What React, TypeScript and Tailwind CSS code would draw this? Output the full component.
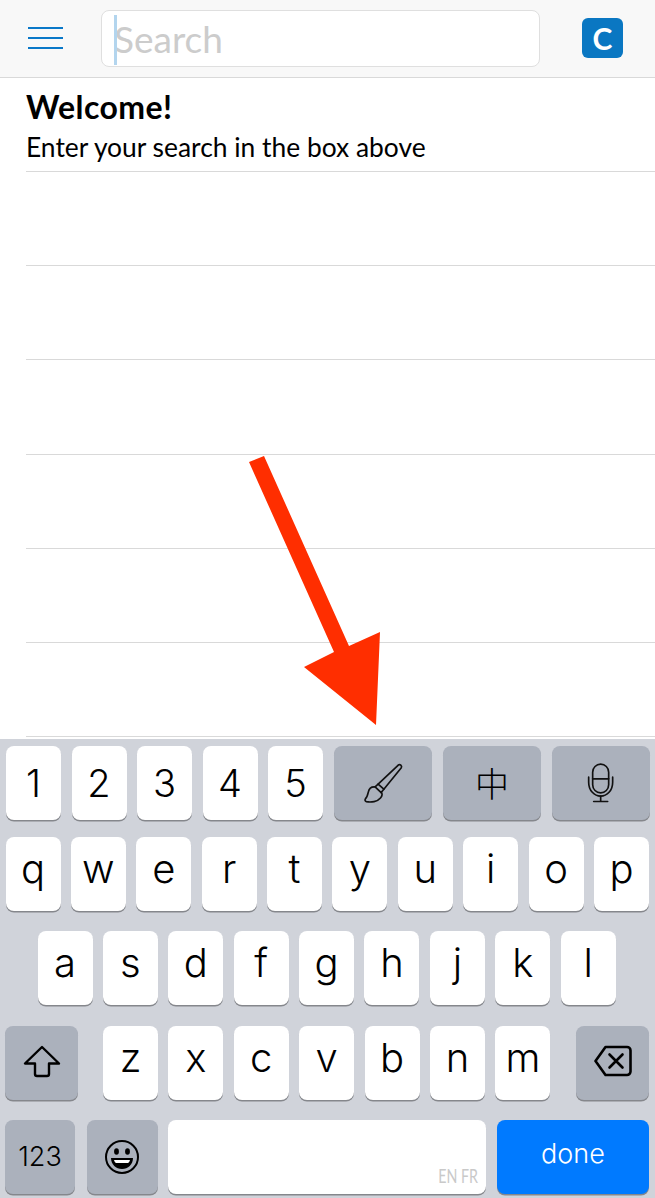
const textFont = "font-['Lato','Noto_Sans',sans-serif]";

const rowsOfLines = [0, 1, 2, 3, 4, 5];

function Key({
  label,
  className = '',
  children,
}: {
  label?: string;
  className?: string;
  children?: React.ReactNode;
}) {
  return (
    <div
      className={`h-[74px] rounded-[8px] flex items-center justify-center shadow-[0_1.5px_0_#85878c] font-['Inter',sans-serif] text-[#000] ${className}`}
    >
      {label}
      {children}
    </div>
  );
}

const DigitKey = ({ label }: { label: string }) => (
  <Key label={label} className="w-[55px] bg-white text-[38px] font-light" />
);

const LetterKey = ({ label }: { label: string }) => (
  <Key label={label} className="w-[55px] bg-white text-[40px] font-light pb-[10px]" />
);

const darkKey = 'bg-[#abb1bc]';

function BrushIcon() {
  return (
    <svg width="42" height="42" viewBox="120 95 125 125" fill="none" stroke="#111" strokeWidth="5" strokeLinejoin="round" strokeLinecap="round">
      <path d="M228 104c5-4 12 2 9 8l-52 64-17-15 60-57z" />
      <path d="M168 161l-9 8 18 17 8-10" />
      <path d="M159 169c-10-1-18 5-20 15-2 9-4 16-9 21-2 3-1 7 3 8 14 3 33 0 42-11 6-7 6-14 2-16" />
    </svg>
  );
}

function MicIcon() {
  return (
    <svg width="30" height="42" viewBox="795 95 90 125" fill="none" stroke="#111" strokeWidth="5" strokeLinecap="round">
      <rect x="815" y="101" width="48" height="86" rx="24" />
      <path d="M815 145H863" />
      <path d="M803 140V155C803 180 820 197 839 197C858 197 875 180 875 155V140" />
      <path d="M839 197V213M818 213H860" />
    </svg>
  );
}

function ShiftIcon() {
  return (
    <svg width="38" height="33" viewBox="0 0 38 33" fill="none" stroke="#000" strokeWidth="2.4" strokeLinejoin="round">
      <path d="M19 2L2 18.500h10V29a2 2 0 0 0 2 2h10a2 2 0 0 0 2-2V18.500h10L19 2z" />
    </svg>
  );
}

function DeleteIcon() {
  return (
    <svg width="38" height="32" viewBox="0 0 38 32" fill="none" stroke="#000" strokeWidth="2.6" strokeLinejoin="round" strokeLinecap="round">
      <path d="M11.500 2H33a3.500 3.500 0 0 1 3.500 3.500v21a3.500 3.500 0 0 1-3.500 3.500H11.500L1.500 16l10-14z" />
      <path d="M15.500 9.500l13 13M28.500 9.500l-13 13" />
    </svg>
  );
}

function EmojiIcon() {
  return (
    <svg width="36" height="36" viewBox="0 0 36 36">
      <circle cx="18" cy="18" r="16" fill="none" stroke="#000" strokeWidth="2" />
      <ellipse cx="12.500" cy="12.500" rx="2.400" ry="3.200" fill="#000" />
      <ellipse cx="23.500" cy="12.500" rx="2.400" ry="3.200" fill="#000" />
      <path d="M7 19h22c0 6.500-5 11-11 11S7 25.500 7 19z" fill="#000" />
      <path d="M10 21h16c-.5 1.500-1 2.500-2 3H12c-1-.5-1.500-1.500-2-3z" fill="#fff" />
    </svg>
  );
}

export default function App() {
  return (
    <div className="relative w-[655px] h-[1198px] bg-white flex flex-col overflow-hidden">
      {/* Top bar */}
      <header className="h-[78px] shrink-0 bg-[#f8f8f8] border-b border-[#d9d9d9] flex items-center pl-[28px] pr-[32px]">
        <button className="w-[35px] flex flex-col gap-[8px] mb-[1px]">
          <span className="block h-[2px] bg-[#0a78c8]" />
          <span className="block h-[2px] bg-[#0a78c8]" />
          <span className="block h-[2px] bg-[#0a78c8]" />
        </button>
        <div className={`ml-[38px] w-[439px] h-[57px] mb-[1px] bg-white border border-[#dfdfdf] rounded-[8px] flex items-center pl-[12px] relative ${textFont}`}>
          <span className="absolute left-[12px] top-[4px] w-[3px] h-[50px] bg-[#b3d5ee]" />
          <span className="text-[37px] leading-[44px] mt-[2px] text-[#cccccc]">Search</span>
        </div>
        <div className={`ml-auto w-[41px] h-[40px] mb-[1px] rounded-[6px] bg-[#0a77c2] text-white text-[30px] font-bold flex items-center justify-center ${textFont}`}>
          C
        </div>
      </header>

      {/* Results */}
      <main className={`flex-1 overflow-hidden pl-[26px] ${textFont}`}>
        <div className="h-[94px] border-b border-[#d9d9d9] pt-[10px]">
          <h1 className="text-[32px] leading-[38px] tracking-[0.4px] font-bold text-black">Welcome!</h1>
          <p className="text-[26.4px] leading-[32px] mt-[5px] text-black">Enter your search in the box above</p>
        </div>
        {rowsOfLines.map((n) => (
          <div key={n} className="h-[94.2px] border-b border-[#d9d9d9]" />
        ))}
      </main>

      {/* Keyboard */}
      <section className="h-[459px] shrink-0 bg-[#d0d3da] pt-[7px] flex flex-col">
        <div className="flex pl-[6px] gap-[10.5px]">
          {['1', '2', '3', '4', '5'].map((k) => (
            <DigitKey key={k} label={k} />
          ))}
          <Key className={`w-[98px] ${darkKey}`}>
            <BrushIcon />
          </Key>
          <Key className={`w-[98px] ml-[1px] ${darkKey} text-[34px] font-['Noto_Sans_CJK_SC',sans-serif] font-light pb-[2px]`} label="中" />
          <Key className={`w-[98px] ${darkKey}`}>
            <MicIcon />
          </Key>
        </div>
        <div className="flex pl-[5.5px] gap-[10.4px] mt-[17px]">
          {'qwertyuiop'.split('').map((k) => (
            <LetterKey key={k} label={k} />
          ))}
        </div>
        <div className="flex pl-[37.5px] gap-[10.4px] mt-[20px]">
          {'asdfghjkl'.split('').map((k) => (
            <LetterKey key={k} label={k} />
          ))}
        </div>
        <div className="flex pl-[5px] mt-[20.5px]">
          <Key className={`w-[73px] ${darkKey} pb-[3px]`}>
            <ShiftIcon />
          </Key>
          <div className="flex gap-[10.4px] ml-[25px]">
            {'zxcvbnm'.split('').map((k) => (
              <LetterKey key={k} label={k} />
            ))}
          </div>
          <Key className={`w-[72.5px] ml-[26px] ${darkKey} pb-[3px]`}>
            <DeleteIcon />
          </Key>
        </div>
        <div className="flex pl-[5px] mt-[20.5px]">
          <Key label="123" className={`w-[70px] ${darkKey} text-[27px] font-light`} />
          <Key className={`w-[70.5px] ml-[12px] ${darkKey}`}>
            <EmojiIcon />
          </Key>
          <Key className="w-[318px] ml-[10.5px] bg-white relative">
            <span className={`absolute right-[8px] bottom-[7px] text-[19px] leading-[22px] text-[#c9c9c9] scale-x-[0.75] origin-right ${textFont}`}>EN FR</span>
          </Key>
          <Key label="done" className="w-[152px] ml-[11px] bg-[#007aff] !text-white text-[27px] font-light pb-[6px]" />
        </div>
      </section>

      {/* Red annotation arrow drawn over the screenshot */}
      <svg className="absolute inset-0 pointer-events-none" width="655" height="1198" viewBox="0 0 655 1198">
        <polygon points="249,462 264,456 349,646 380,632 376,725 304,667 334,652" fill="#ff2e00" />
      </svg>
    </div>
  );
}
